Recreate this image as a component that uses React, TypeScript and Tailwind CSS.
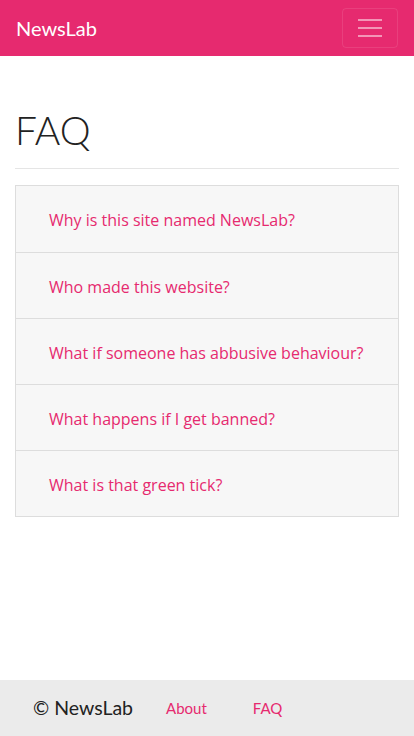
import React from "react";

const questions = [
  "Why is this site named NewsLab?",
  "Who made this website?",
  "What if someone has abbusive behaviour?",
  "What happens if I get banned?",
  "What is that green tick?",
];

export default function App() {
  return (
    <div className="min-h-[736px] flex flex-col bg-white font-['Lato','Open_Sans',sans-serif]">
      <nav className="h-14 bg-[#e62a6f] flex items-center justify-between pl-4 pr-4">
        <span className="text-white text-[20px] leading-none">NewsLab</span>
        <button className="w-14 h-10 border border-white/10 rounded-[4px] flex flex-col items-center justify-center gap-[6px]">
          <span className="block w-6 h-[2px] bg-white/50" />
          <span className="block w-6 h-[2px] bg-white/50" />
          <span className="block w-6 h-[2px] bg-white/50" />
        </button>
      </nav>

      <main className="px-[15px] pt-[50px]">
        <h1 className="text-[39px] leading-[48px] font-light text-[#222] font-['Lato',sans-serif] mb-[14px]">
          FAQ
        </h1>
        <hr className="border-t border-[#e5e5e5]" />
        <div className="mt-4 border border-[#ddd] bg-[#f7f7f7]">
          {questions.map((q, i) => (
            <div
              key={q}
              className={
                "h-[66px] flex items-center pl-[33px] pt-[2px] text-[16px] text-[#e62a6f] font-['Open_Sans',sans-serif] " +
                (i > 0 ? "border-t border-[#ddd]" : "")
              }
            >
              {q}
            </div>
          ))}
        </div>
      </main>

      <footer className="mt-auto h-14 bg-[#ebebeb] flex items-center pl-[33px]">
        <span className="text-[19.5px] text-[#222]">© NewsLab</span>
        <a className="ml-[33px] text-[15px] text-[#e62a6f]">About</a>
        <a className="ml-[46px] text-[15px] text-[#e62a6f]">FAQ</a>
      </footer>
    </div>
  );
}
